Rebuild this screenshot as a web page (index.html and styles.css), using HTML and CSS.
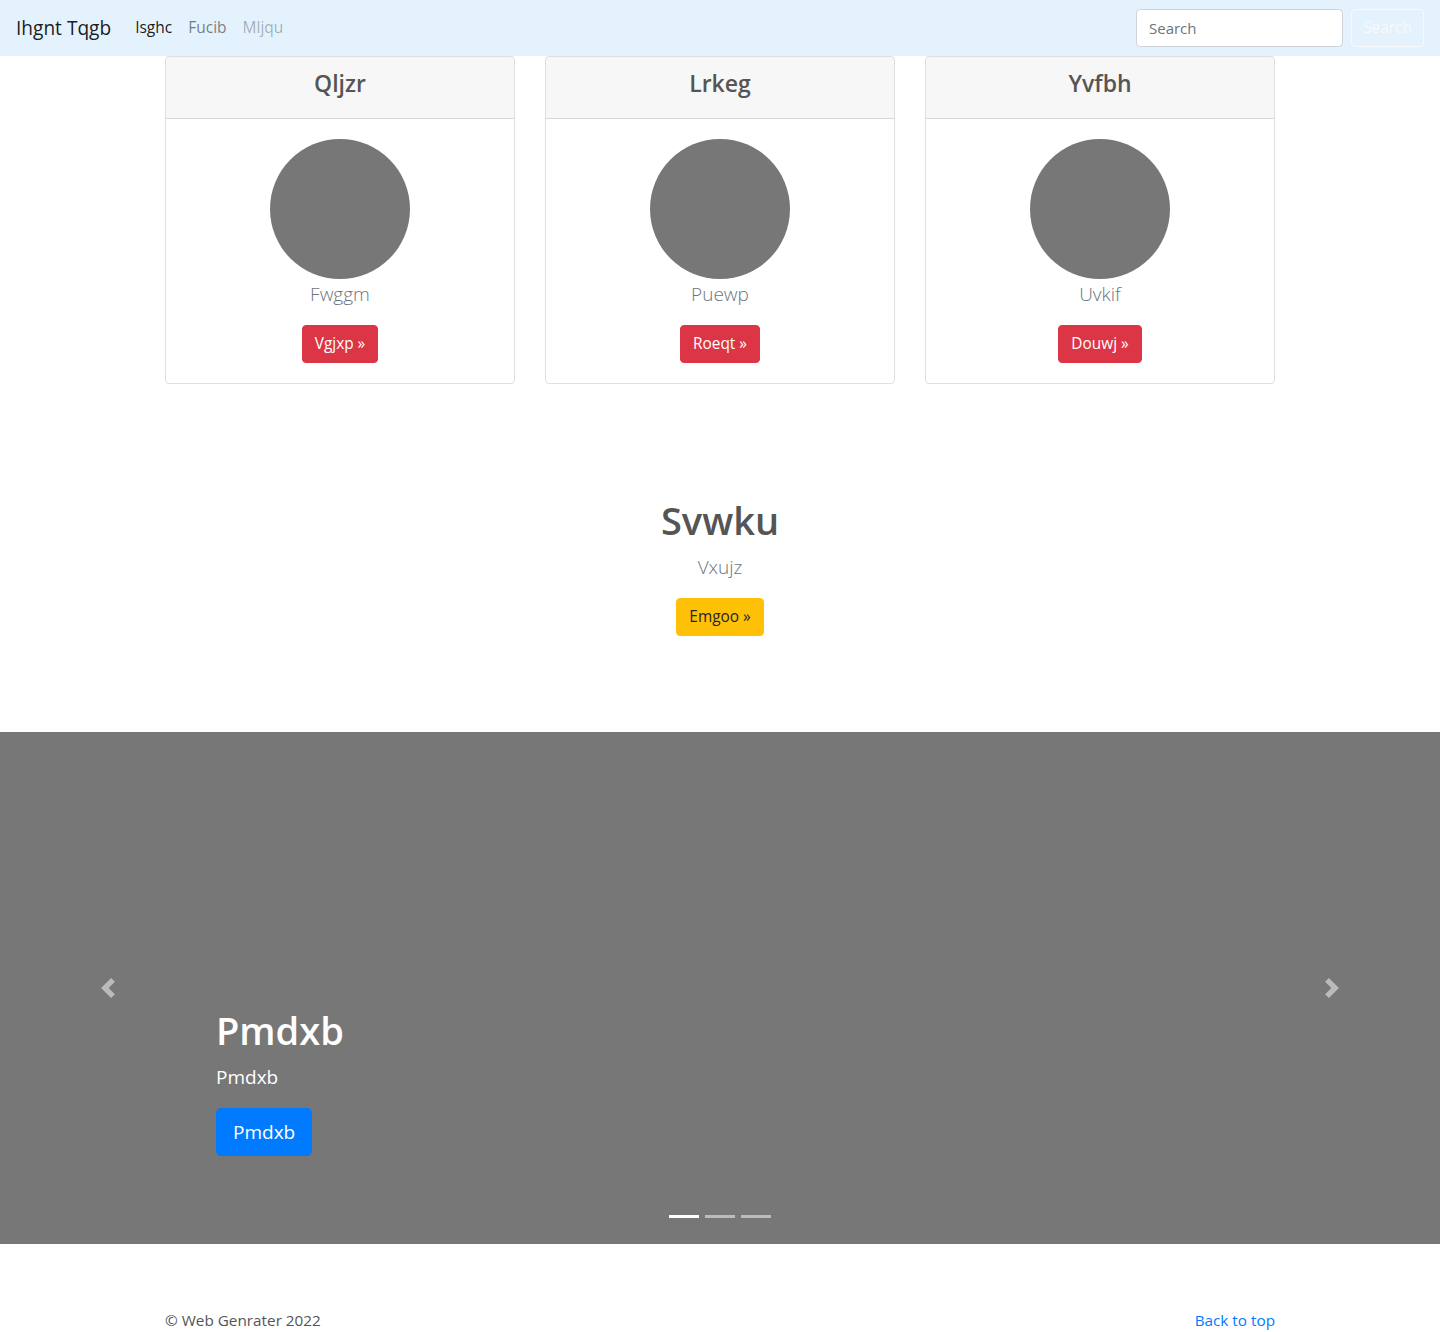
FILE: index.html
```html
<!DOCTYPE html>
<html lang="en">
<head>
<meta charset="utf-8">
<title>Ihgnt Tqgb</title>
<link rel="stylesheet" href="styles.css">
</head>
<body>
<nav class="navbar">
  <a class="brand" href="#">Ihgnt Tqgb</a>
  <ul class="nav">
    <li><a class="nav-link active" href="#">Isghc</a></li>
    <li><a class="nav-link" href="#">Fucib</a></li>
    <li><a class="nav-link disabled" href="#">Mljqu</a></li>
  </ul>
  <form class="search">
    <input class="search-input" type="text" placeholder="Search">
    <button class="btn btn-outline-light" type="button">Search</button>
  </form>
</nav>

<div class="container">
  <div class="cards">
    <div class="card">
      <div class="card-header"><h4>Qljzr</h4></div>
      <div class="card-body">
        <div class="avatar"></div>
        <p class="lead muted">Fwggm</p>
        <a class="btn btn-danger" href="#">Vgjxp &raquo;</a>
      </div>
    </div>
    <div class="card">
      <div class="card-header"><h4>Lrkeg</h4></div>
      <div class="card-body">
        <div class="avatar"></div>
        <p class="lead muted">Puewp</p>
        <a class="btn btn-danger" href="#">Roeqt &raquo;</a>
      </div>
    </div>
    <div class="card">
      <div class="card-header"><h4>Yvfbh</h4></div>
      <div class="card-body">
        <div class="avatar"></div>
        <p class="lead muted">Uvkif</p>
        <a class="btn btn-danger" href="#">Douwj &raquo;</a>
      </div>
    </div>
  </div>
</div>

<section class="feature">
  <h1>Svwku</h1>
  <p class="lead muted">Vxujz</p>
  <a class="btn btn-warning" href="#">Emgoo &raquo;</a>
</section>

<div class="carousel">
  <a class="control prev" href="#">
    <svg width="20" height="20" viewBox="0 0 8 8"><path fill="#fff" d="M5.25 0l-4 4 4 4 1.5-1.5L4.25 4l2.5-2.5L5.25 0z"/></svg>
  </a>
  <a class="control next" href="#">
    <svg width="20" height="20" viewBox="0 0 8 8"><path fill="#fff" d="M2.75 0l-1.5 1.5L3.75 4l-2.5 2.5L2.75 8l4-4-4-4z"/></svg>
  </a>
  <div class="caption">
    <h1>Pmdxb</h1>
    <p class="caption-text">Pmdxb</p>
    <a class="btn btn-lg btn-primary" href="#">Pmdxb</a>
  </div>
  <ol class="indicators">
    <li class="active"></li>
    <li></li>
    <li></li>
  </ol>
</div>

<footer class="container footer">
  <p>&copy; Web Genrater 2022</p>
  <p><a class="link" href="#">Back to top</a></p>
</footer>
</body>
</html>
```

FILE: styles.css
```css
* { box-sizing: border-box; }

body {
  margin: 0;
  font-family: "Open Sans", "Noto Sans", sans-serif;
  font-size: 16px;
  line-height: 1.5;
  color: #555;
  background: #fff;
}

a { text-decoration: none; }

/* Navbar */
.navbar {
  display: flex;
  align-items: center;
  height: 56px;
  padding: 8px 16px;
  background: #e3f2fd;
}
.brand {
  font-size: 19.1px;
  line-height: 30px;
  margin-right: 16px;
  color: rgba(0, 0, 0, 0.9);
}
.nav {
  display: flex;
  list-style: none;
  margin: 0;
  padding: 0;
  flex: 1;
}
.nav-link {
  display: block;
  padding: 8px 8px;
  font-size: 15.5px;
  color: rgba(0, 0, 0, 0.5);
}
.nav-link.active { color: rgba(0, 0, 0, 0.9); }
.nav-link.disabled { color: rgba(0, 0, 0, 0.3); }

.search {
  display: flex;
  align-items: center;
  gap: 8px;
}
.search-input {
  width: 207px;
  height: 38px;
  padding: 6px 12px;
  font-family: inherit;
  font-size: 15px;
  color: #495057;
  background: #fff;
  border: 1px solid #ced4da;
  border-radius: 4px;
}
.search-input::placeholder { color: #6c757d; }

/* Buttons */
.btn {
  display: inline-block;
  padding: 6px 12px;
  font-family: inherit;
  font-size: 15.4px;
  line-height: 24px;
  border: 1px solid transparent;
  border-radius: 4px;
  cursor: pointer;
}
.btn-outline-light {
  color: #f8f9fa;
  background: transparent;
  border-color: #f8f9fa;
  width: 73px;
  padding: 6px 0;
}
.btn-danger { color: #fff; background: #dc3545; border-color: #dc3545; }
.btn-warning { color: #212529; background: #ffc107; border-color: #ffc107; }
.btn-primary { color: #fff; background: #007bff; border-color: #007bff; }
.btn-lg {
  padding: 8px 16px;
  font-size: 19px;
  line-height: 30px;
  border-radius: 5px;
}

/* Layout */
.container {
  width: 1140px;
  margin: 0 auto;
  padding: 0 15px;
}

.cards {
  display: grid;
  grid-template-columns: repeat(3, 1fr);
  gap: 30px;
}
.card {
  border: 1px solid rgba(0, 0, 0, 0.125);
  border-radius: 4px;
  overflow: hidden;
}
.card-header {
  padding: 12px 20px;
  background: rgba(0, 0, 0, 0.03);
  border-bottom: 1px solid rgba(0, 0, 0, 0.125);
  text-align: center;
}
.card-header h4 {
  margin: 0 0 8px;
  font-size: 23px;
  font-weight: 600;
  line-height: 29px;
  color: #555;
}
.card-body {
  padding: 20px;
  text-align: center;
}
.avatar {
  width: 140px;
  height: 140px;
  margin: 0 auto;
  border-radius: 50%;
  background: #777;
}

.lead {
  margin: 0 0 16px;
  font-size: 19px;
  line-height: 30px;
  font-weight: 300;
}
.muted { color: #6c757d; }

/* Feature */
.feature {
  padding: 112px 0 96px;
  text-align: center;
}
.feature h1 {
  margin: 0 0 8px;
  font-size: 38px;
  line-height: 48px;
  font-weight: 600;
  color: #555;
}

/* Carousel */
.carousel {
  position: relative;
  height: 512px;
  background: #777;
}
.control {
  position: absolute;
  top: 0;
  bottom: 0;
  width: 15%;
  display: flex;
  align-items: center;
  justify-content: center;
  opacity: 0.5;
}
.control.prev { left: 0; }
.control.next { right: 0; }

.caption {
  position: absolute;
  left: 15%;
  right: 15%;
  bottom: 88px;
  color: #fff;
}
.caption h1 {
  margin: 0 0 8px;
  font-size: 38px;
  line-height: 48px;
  font-weight: 600;
}
.caption-text {
  margin: 0 0 16px;
  font-size: 19px;
  line-height: 30px;
}
.caption .btn { vertical-align: top; }

.indicators {
  position: absolute;
  left: 0;
  right: 0;
  bottom: 26px;
  margin: 0;
  padding: 0;
  list-style: none;
  display: flex;
  justify-content: center;
}
.indicators li {
  width: 30px;
  height: 3px;
  margin: 0 3px;
  background: #fff;
  opacity: 0.5;
}
.indicators li.active { opacity: 1; }

/* Footer */
.footer {
  display: flex;
  justify-content: space-between;
  padding-top: 64px;
}
.footer p {
  margin: 0 0 16px;
  font-size: 15.3px;
  line-height: 24px;
}
.link { color: #007bff; }
```
